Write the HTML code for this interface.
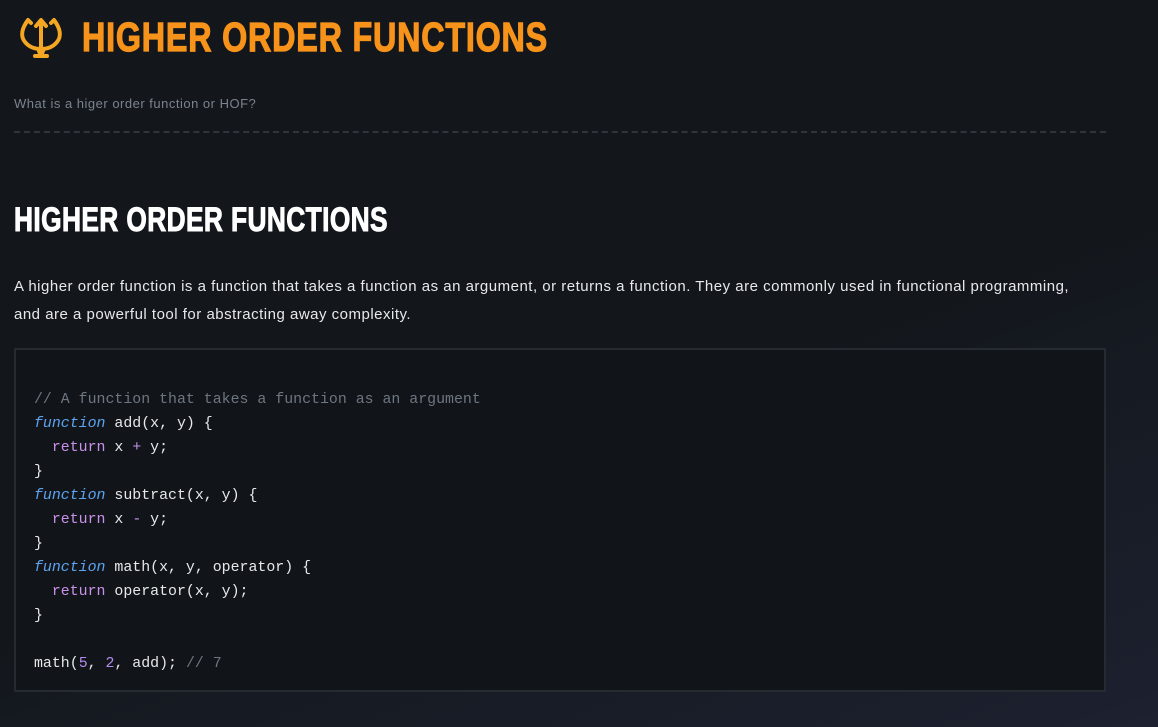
<!DOCTYPE html>
<html><head><meta charset="utf-8"><style>
html,body{margin:0;padding:0}
body{width:1158px;height:727px;overflow:hidden;background:linear-gradient(160deg,#13171c 0%,#13171c 55%,#1d2130 100%);font-family:"Liberation Sans",sans-serif;position:relative}
.t{position:absolute;left:82px;top:14px;font-family:"Liberation Sans",sans-serif;font-weight:bold;font-size:41px;letter-spacing:1px;color:#f7931a;-webkit-text-stroke:1.2px #f7931a;white-space:nowrap;transform-origin:left top}
.sub{position:absolute;left:14px;top:96px;font-size:13px;color:#7b838d;letter-spacing:0.5px}
.hr{position:absolute;left:14px;top:131px;width:1092px;border-top:2px dashed #2f353c}
.h2{position:absolute;left:14px;top:201px;font-family:"Liberation Sans",sans-serif;font-weight:bold;font-size:34px;color:#fff;-webkit-text-stroke:1px #fff;letter-spacing:0.5px;white-space:nowrap;transform-origin:left top}
.p{position:absolute;left:14px;top:273px;width:1085px;font-size:15px;line-height:28px;color:#e6e8ea;letter-spacing:0.5px}
.code{position:absolute;left:14px;top:348px;width:1088px;height:340px;background:#111418;border:2px solid #262b31}
pre{margin:0;position:absolute;left:18px;top:38px;font-family:"Liberation Mono",monospace;font-size:14.9px;line-height:24px;color:#e6e8ea}
.c{color:#6e7681}.k{color:#5ea4ef;font-style:italic}.r{color:#c792ea}.n{color:#b48cf0}
</style></head><body>
<svg style="position:absolute;left:18px;top:16px" width="46" height="44" viewBox="0 0 46 44" fill="none" stroke="#f5a623" stroke-width="4" stroke-linecap="round" stroke-linejoin="round">
<path d="M23 5 V34"/><path d="M18 10 L23 4 L28 10" fill="#f5a623"/>
<path d="M13 7 L10 4 C4 12 2 20 7 26 C11 31 17 33 23 33"/>
<path d="M33 7 L36 4 C42 12 44 20 39 26 C35 31 29 33 23 33"/>
<path d="M19 32 L21 38 H25 L27 32 Z" fill="#f5a623" stroke-width="2"/>
<path d="M17 40 H29" stroke-width="4"/>
</svg>
<div class="t">HIGHER ORDER FUNCTIONS</div>
<div class="sub">What is a higer order function or HOF?</div>
<div class="hr"></div>
<div class="h2">HIGHER ORDER FUNCTIONS</div>
<div class="p">A higher order function is a function that takes a function as an argument, or returns a function. They are commonly used in functional programming, and are a powerful tool for abstracting away complexity.</div>
<div class="code"><pre><span class="c">// A function that takes a function as an argument</span>
<span class="k">function</span> add(x, y) {
  <span class="r">return</span> x <span class="r">+</span> y;
}
<span class="k">function</span> subtract(x, y) {
  <span class="r">return</span> x <span class="r">-</span> y;
}
<span class="k">function</span> math(x, y, operator) {
  <span class="r">return</span> operator(x, y);
}

math(<span class="n">5</span>, <span class="n">2</span>, add); <span class="c">// 7</span></pre></div>
<script>
(function(){var t=document.querySelector('.t');var w=t.getBoundingClientRect().width;t.style.transform='scaleX('+(466/w)+')';
var h=document.querySelector('.h2');var w2=h.getBoundingClientRect().width;h.style.transform='scaleX('+(374/w2)+')';})();
</script>
</body></html>
